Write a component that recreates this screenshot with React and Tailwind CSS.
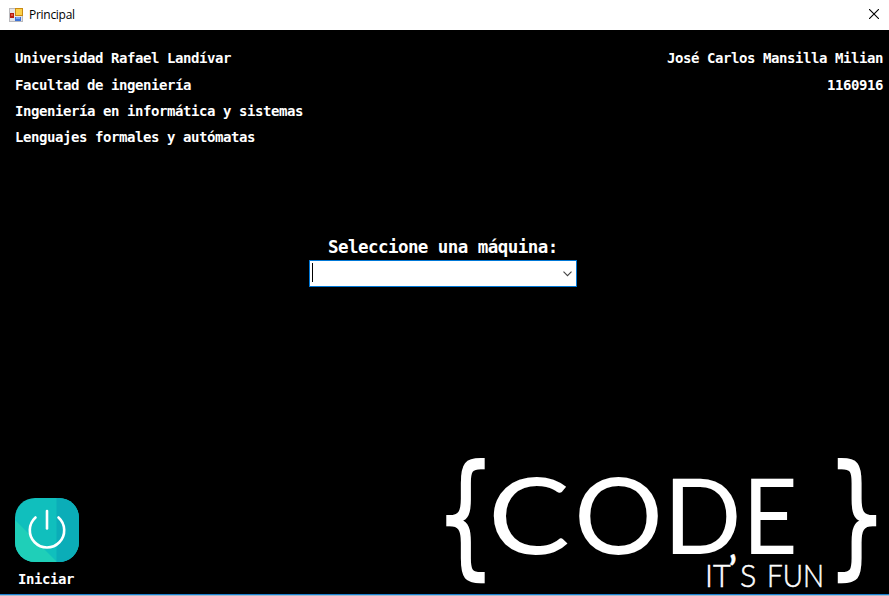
const mono = "font-['DejaVu_Sans_Mono',monospace] font-bold";

function FormIcon() {
  return (
    <svg width="14" height="14" viewBox="0 0 14 14" shapeRendering="crispEdges">
      <rect x="0.5" y="0.5" width="13" height="13" fill="#e4e4e8" stroke="#b9b9bd" />
      <rect x="6" y="0" width="8" height="8" fill="#c98a12" />
      <rect x="7" y="1" width="6" height="6" fill="#fbd04a" />
      <rect x="1" y="5" width="4" height="5" fill="#b51c10" />
      <rect x="2" y="6" width="2" height="2" fill="#e0553f" />
      <rect x="6" y="9" width="6" height="4" fill="#3d72d6" />
      <rect x="7" y="9" width="4" height="2" fill="#7ba6f0" />
    </svg>
  );
}

function TitleBar() {
  return (
    <header className="flex h-[30px] items-center bg-white pl-[9px] pr-[10px]">
      <FormIcon />
      <span className="ml-[6px] font-['Open_Sans',sans-serif] text-[12px] leading-4 tracking-[-0.28px] text-black">Principal</span>
      <svg className="mb-[2px] ml-auto" width="10" height="10" viewBox="0 0 10 10" stroke="#000" strokeWidth="1.1">
        <path d="M0 0L10 10M10 0L0 10" />
      </svg>
    </header>
  );
}

function PowerIcon() {
  return (
    <svg width="64" height="64" viewBox="0 0 64 64">
      <defs>
        <clipPath id="tile"><rect width="64" height="64" rx="20" /></clipPath>
      </defs>
      <g clipPath="url(#tile)">
        <rect width="64" height="64" fill="#10bfbd" />
        <path d="M0 22L42 64H0Z" fill="#1fcfb8" />
        <rect x="41.5" width="22.5" height="64" fill="#0badb8" />
      </g>
      <g fill="none" stroke="#fff" strokeWidth="2.6" strokeLinecap="round">
        <path d="M20.5 19.5A17.2 17.2 0 1 0 43.5 19.5" />
        <path d="M32 13V30.5" />
      </g>
    </svg>
  );
}

function CodeLogo() {
  return (
    <svg className="overflow-visible" width="449" height="146" viewBox="440 448 449 146" fill="#fff">
      <g fontFamily="'DejaVu Sans', sans-serif" fontWeight="400" fontSize="133.5" stroke="#fff" strokeWidth="1.8">
        <text x="435" y="560.5" textLength="61" lengthAdjust="spacingAndGlyphs">{"{"}</text>
        <text x="826.5" y="560.5" textLength="61" lengthAdjust="spacingAndGlyphs">{"}"}</text>
      </g>
      <g fontFamily="Lato, sans-serif" fontWeight="400">
        <text x="488" y="553.7" fontSize="106" textLength="82" lengthAdjust="spacingAndGlyphs">C</text>
        <text x="574" y="553.7" fontSize="106" textLength="89" lengthAdjust="spacingAndGlyphs">O</text>
        <text x="663.5" y="553.5" fontSize="105" textLength="78" lengthAdjust="spacingAndGlyphs">D</text>
        <text x="742.5" y="553.5" fontSize="105" textLength="55" lengthAdjust="spacingAndGlyphs">E</text>
      </g>
      <g fontFamily="Lato, sans-serif" fontWeight="300" fontSize="30.5" stroke="#fff" strokeWidth="0.5">
        <text x="705" y="587">IT</text>
        <text x="729" y="581" fontSize="34" fontWeight="700">’</text>
        <text x="740" y="587">S</text>
        <text x="767" y="587" textLength="57" lengthAdjust="spacingAndGlyphs">FUN</text>
      </g>
    </svg>
  );
}

export default function App() {
  return (
    <div className="flex h-[596px] w-[889px] flex-col overflow-hidden bg-black text-white">
      <TitleBar />
      <main className={`flex h-[564px] flex-col ${mono}`}>
        <div className="flex h-[205px] justify-between pl-[15px] pr-[6px] pt-[15.3px] text-[14px] leading-[26.3px] tracking-[-0.43px]">
          <div className="whitespace-nowrap">
            <p>Universidad Rafael Landívar</p>
            <p>Facultad de ingeniería</p>
            <p>Ingeniería en informática y sistemas</p>
            <p>Lenguajes formales y autómatas</p>
          </div>
          <div className="whitespace-nowrap text-right">
            <p>José Carlos Mansilla Milian</p>
            <p>1160916</p>
          </div>
        </div>
        <div className="ml-[309px] w-[268px]">
          <label className="block h-[25px] whitespace-nowrap pl-[19px] text-[17.5px] leading-[24px] tracking-[-0.55px]">Seleccione una máquina:</label>
          <div className="flex h-[27px] items-center border border-[#0078d7] bg-white pl-[2px] pr-1">
            <span className="mb-[2px] h-[19px] w-px bg-black" />
            <svg className="ml-auto" width="9" height="6" viewBox="0 0 9 6" fill="none" stroke="#444" strokeWidth="1.1">
              <path d="M0.5 0.7L4.5 4.7L8.5 0.7" />
            </svg>
          </div>
        </div>
        <div className="mt-auto flex h-[146px] items-end justify-between">
          <button className="ml-[15px] flex h-[96px] w-[64px] flex-col items-start">
            <PowerIcon />
            <span className="ml-[3px] mt-[5px] text-[14px] leading-6 tracking-[-0.43px]">Iniciar</span>
          </button>
          <CodeLogo />
        </div>
      </main>
      <footer className="h-[2px] border-t border-[#1b7fd0] bg-[#a9bccb]" />
    </div>
  );
}
